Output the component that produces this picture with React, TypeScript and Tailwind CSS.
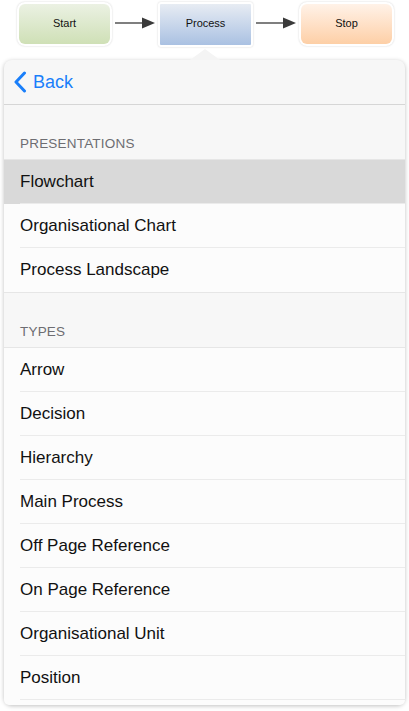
import React from "react";

const presentations = ["Flowchart", "Organisational Chart", "Process Landscape"];
const types = [
  "Arrow",
  "Decision",
  "Hierarchy",
  "Main Process",
  "Off Page Reference",
  "On Page Reference",
  "Organisational Unit",
  "Position",
];

function Arrow() {
  return (
    <svg width="42" height="14" viewBox="0 0 42 14" className="shrink-0">
      <line x1="1" y1="7" x2="30" y2="7" stroke="#3a3a3a" strokeWidth="1.3" />
      <path d="M28 1.5 L41 7 L28 12.5 Z" fill="#3a3a3a" />
    </svg>
  );
}

function Row({ label, selected, full }: { label: string; selected?: boolean; full?: boolean }) {
  return (
    <div className={(selected ? "bg-[#d9d9d9]" : "bg-[#fcfcfc]") + (full ? " border-b border-[#e6e6e6]" : "")}>
      <div
        className={
          "h-[44px] flex items-center text-[17px] text-[#111] " +
          (full ? "pl-4" : "ml-4 border-b border-[#ebebeb]")
        }
      >
        {label}
      </div>
    </div>
  );
}

function Section({ title, items, selected, closed }: { title: string; items: string[]; selected?: string; closed?: boolean }) {
  return (
    <div>
      <div className="h-[55px] flex items-end pb-[5px] pl-4 text-[13.5px] text-[#6d6d72] tracking-[0.2px] border-b border-[#e6e6e6]">
        {title}
      </div>
      {items.map((it, i) => (
        <Row key={it} label={it} selected={it === selected} full={closed && i === items.length - 1} />
      ))}
    </div>
  );
}

export default function App() {
  return (
    <div className="w-[409px] h-[711px] bg-white overflow-hidden font-['Liberation_Sans',Arial,sans-serif]">
      {/* Flow diagram */}
      <div className="flex items-start pl-[17px] pt-[2px] h-[48px]">
        <div className="w-[95px] h-[44px] rounded-[8px] bg-white p-[2px] shadow-[0_0_2px_rgba(0,0,0,0.18)]">
          <div className="w-full h-full rounded-[6px] bg-gradient-to-b from-[#ebf1e3] to-[#cfe0b6] flex items-center justify-center pb-[2px] text-[11px] text-[#111]">
            Start
          </div>
        </div>
        <div className="mx-[2px] mt-[14px]">
          <Arrow />
        </div>
        <div className="w-[95px] h-[45px] rounded-[3px] bg-white p-[2px] shadow-[0_0_2px_rgba(0,0,0,0.18)]">
          <div className="w-full h-full rounded-[1px] bg-gradient-to-b from-[#e7ecf3] to-[#aac1e2] flex items-center justify-center pb-[2px] text-[11px] text-[#111]">
            Process
          </div>
        </div>
        <div className="mx-[2px] mt-[14px]">
          <Arrow />
        </div>
        <div className="w-[95px] h-[44px] rounded-[8px] bg-white p-[2px] shadow-[0_0_2px_rgba(0,0,0,0.18)]">
          <div className="w-full h-full rounded-[6px] bg-gradient-to-b from-[#fff2e8] to-[#fdcfa6] flex items-center justify-center pb-[2px] text-[11px] text-[#111]">
            Stop
          </div>
        </div>
      </div>

      {/* Popover */}
      <div className="relative mx-[4px] mt-[12px] w-[401px] rounded-[8px] bg-[#f7f7f7] shadow-[0_1px_4px_rgba(0,0,0,0.25)]">
        <div className="absolute left-[186px] -top-[11px] w-0 h-0 border-l-[15px] border-r-[15px] border-b-[11px] border-l-transparent border-r-transparent border-b-[#f4f4f4]" />
        <div className="h-[45px] flex items-center border-b border-[#d6d6d6] rounded-t-[8px]">
          <svg width="14" height="22" viewBox="0 0 14 22" className="ml-[9px]">
            <path d="M11.5 2 L3 11 L11.5 20" fill="none" stroke="#1a7ffa" strokeWidth="3" strokeLinecap="round" strokeLinejoin="round" />
          </svg>
          <span className="ml-[6px] text-[18px] text-[#1a7ffa]">Back</span>
        </div>
        <Section title="PRESENTATIONS" items={presentations} selected="Flowchart" closed />
        <Section title="TYPES" items={types} />
        <div className="h-[5px] bg-[#fcfcfc] rounded-b-[8px]" />
      </div>
    </div>
  );
}
